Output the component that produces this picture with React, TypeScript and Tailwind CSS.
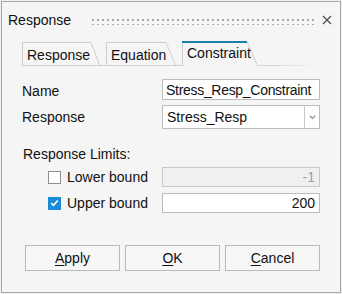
import React from 'react';

type TabProps = {
  label: string;
  w: number;
  slant: number;
  active?: boolean;
  className: string;
};

function Tab({ label, w, slant, active, className }: TabProps) {
  const h = active ? 25 : 23;
  return (
    <div className={`relative ${className}`}>
      <svg className="absolute inset-0" width={w} height={h} viewBox={`0 0 ${w} ${h}`}>
        <path
          d={`M0.5 ${h} V0.5 H${w - slant} L${w - 0.5} ${h}`}
          fill="#f5f5f5"
          stroke="#cdcdcd"
          strokeWidth="1"
        />
        {active && <rect x="0" y="0" width={w - slant} height="2" fill="#1b7fae" />}
      </svg>
      <span className={`relative block pl-[5px] leading-[16px] ${active ? 'pt-[4px]' : 'pt-[5px]'}`}>
        {label}
      </span>
    </div>
  );
}

function Checkbox({ checked }: { checked?: boolean }) {
  if (checked) {
    return (
      <span className="flex h-[13px] w-[13px] items-center justify-center bg-[#1a8bd6]">
        <svg width="9" height="8" viewBox="0 0 9 8">
          <path d="M1.2 4.2 L3.5 6.4 L7.8 1.5" fill="none" stroke="#fff" strokeWidth="1.6" />
        </svg>
      </span>
    );
  }
  return <span className="block h-[13px] w-[13px] border border-[#8f8f8f] bg-white" />;
}

function Btn({ children }: { children: React.ReactNode }) {
  return (
    <button className="flex h-[26px] w-[95px] items-center justify-center border border-[#b9b9b9] bg-[#f7f7f7] leading-[16px] text-[#111]">
      {children}
    </button>
  );
}

export default function App() {
  return (
    <div className="h-[294px] w-[342px] bg-[#f0f0f0] p-[1px] font-['Liberation_Sans',Arial,sans-serif] text-[14px] text-[#111]">
      <div className="h-[292px] w-[340px] border border-[#a6a6a6] bg-[#f5f5f5]">
        {/* Title bar */}
        <div className="flex h-[36px] items-center">
          <div className="w-[90px] pl-[6px] leading-[16px] text-[14px]">Response</div>
          <svg width="224" height="12" viewBox="0 0 224 12">
            <defs>
              <pattern id="grip" width="5" height="5" patternUnits="userSpaceOnUse">
                <rect x="0" y="0" width="2" height="2" fill="#a9a9a9" />
              </pattern>
            </defs>
            <rect x="0" y="4" width="224" height="7" fill="url(#grip)" />
          </svg>
          <svg className="ml-[6px]" width="10" height="10" viewBox="0 0 10 10">
            <path d="M1 1 L9 9 M9 1 L1 9" stroke="#4a4a4a" strokeWidth="1.2" />
          </svg>
        </div>

        {/* Tabs */}
        <div className="mt-[3px] ml-[20px] w-[298px]">
          <div className="relative flex items-end gap-[6px]">
            <Tab label="Response" w={78} slant={9} className="h-[23px] w-[78px]" />
            <Tab label="Equation" w={70} slant={10} className="h-[23px] w-[70px]" />
            <Tab label="Constraint" w={76} slant={11} active className="z-10 -mb-px h-[25px] w-[76px]" />
          </div>
          <div className="h-px bg-linear-to-r from-[#cfcfcf] via-[#d6d6d6] via-85% to-transparent" />
        </div>

        {/* Form */}
        <div className="mt-[13px] pl-[20px] pr-[20px]">
          <div className="flex items-center">
            <span className="w-[140px] pt-[2px] leading-[16px]">Name</span>
            <div className="flex h-[21px] w-[158px] items-center border border-[#bcbcbc] bg-white pl-[3px] leading-[16px] tracking-[-0.3px]">
              Stress_Resp_Constraint
            </div>
          </div>
          <div className="mt-[5px] flex items-center">
            <span className="w-[140px] leading-[16px]">Response</span>
            <div className="flex h-[24px] w-[158px] border border-[#bcbcbc] bg-white">
              <span className="flex flex-1 items-center pl-[4px] leading-[16px]">Stress_Resp</span>
              <span className="flex w-[15px] items-center justify-center border-l border-[#c8c8c8]">
                <svg width="7" height="5" viewBox="0 0 7 5">
                  <path d="M0.8 0.8 L3.5 3.6 L6.2 0.8" fill="none" stroke="#9a9a9a" strokeWidth="1.4" />
                </svg>
              </span>
            </div>
          </div>

          <div className="mt-[17px] pl-[1px] leading-[16px]">Response Limits:</div>

          <div className="mt-[5px] flex items-center">
            <div className="flex w-[140px] items-center pl-[26px]">
              <Checkbox />
              <span className="ml-[6px] leading-[16px]">Lower bound</span>
            </div>
            <div className="flex h-[20px] w-[158px] items-center justify-end border border-[#c9c9c9] bg-[#f0f0f0] pr-[4px] leading-[16px] text-[#9b9b9b]">
              -1
            </div>
          </div>
          <div className="mt-[6px] flex items-center">
            <div className="flex w-[140px] items-center pl-[26px]">
              <Checkbox checked />
              <span className="ml-[6px] leading-[16px]">Upper bound</span>
            </div>
            <div className="flex h-[20px] w-[158px] items-center justify-end border border-[#bcbcbc] bg-white pr-[4px] leading-[16px]">
              200
            </div>
          </div>
        </div>

        {/* Buttons */}
        <div className="mt-[32px] flex gap-[5px] pl-[23px]">
          <Btn>
            <span className="underline decoration-1 underline-offset-2">A</span>pply
          </Btn>
          <Btn>
            <span className="underline decoration-1 underline-offset-2">O</span>K
          </Btn>
          <Btn>
            <span className="underline decoration-1 underline-offset-2">C</span>ancel
          </Btn>
        </div>
      </div>
    </div>
  );
}
